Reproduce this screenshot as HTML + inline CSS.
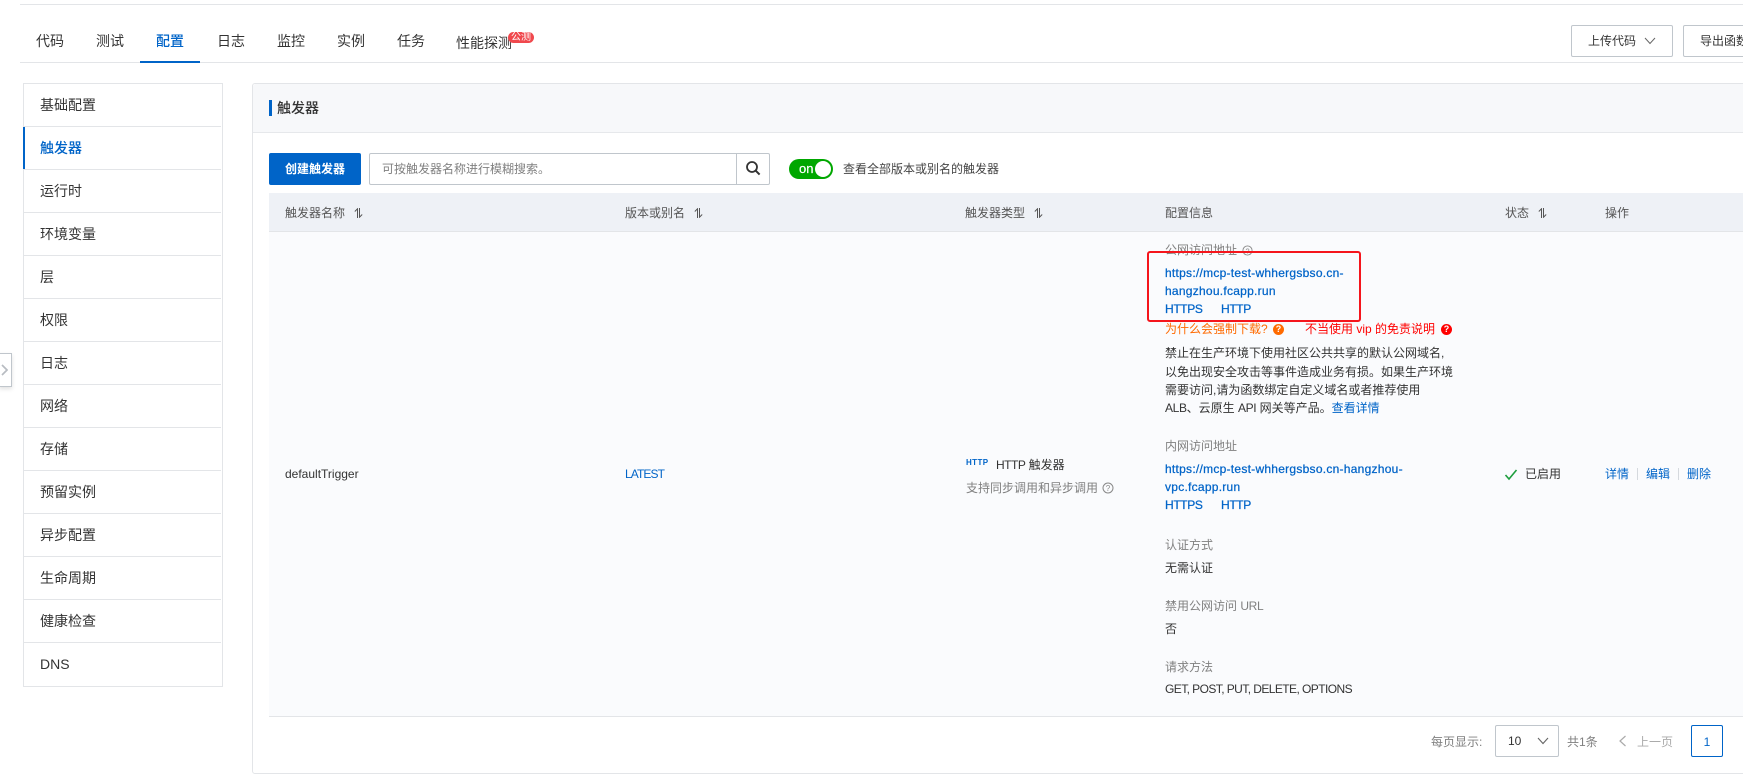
<!DOCTYPE html>
<html lang="zh-CN"><head><meta charset="utf-8"><title>触发器</title>
<style>
html,body{margin:0;padding:0;background:#fff}
body{width:1743px;height:779px;overflow:hidden;position:relative;font-family:"Liberation Sans","Noto Sans CJK SC",sans-serif;font-size:12px;color:#333}
.a,.t{position:absolute}
.t{white-space:nowrap;line-height:18px;height:18px}
.tab{font-size:14px;line-height:20px;height:20px;color:#333}
.m{position:absolute;left:23px;width:198px;height:42px;border-bottom:1px solid #e3e5e8;font-size:14px;line-height:43px;text-indent:17px;color:#333;box-sizing:content-box}
.h{color:#555}.g{color:#808080}
.l{color:#0064c8}.b{font-weight:500}
.k{-webkit-text-stroke:.25px currentColor;letter-spacing:.26px}
.u{letter-spacing:-.35px}
svg{position:absolute;display:block}
</style></head><body>
<div class="a" style="left:20px;right:0;top:4px;height:1px;background:#e3e5e8"></div>
<div class="a" style="left:20px;right:0;top:62px;height:1px;background:#e3e5e8"></div>
<div class="a" style="left:140px;width:60px;top:61px;height:2px;background:#0064c8"></div>
<div class="t tab" style="left:36px;top:31px">代码</div>
<div class="t tab" style="left:96px;top:31px">测试</div>
<div class="t tab b" style="left:156px;top:31px;color:#0064c8">配置</div>
<div class="t tab" style="left:217px;top:31px">日志</div>
<div class="t tab" style="left:277px;top:31px">监控</div>
<div class="t tab" style="left:337px;top:31px">实例</div>
<div class="t tab" style="left:397px;top:31px">任务</div>
<div class="t tab" style="left:456px;top:33px">性能探测</div>
<div class="a" style="left:508px;top:32px;width:26px;height:11px;background:#f0484d;border-radius:6px;color:#fff;font-size:10px;line-height:11px;text-align:center">公测</div>

<div class="a" style="left:1571px;top:25px;width:100px;height:30px;border:1px solid #c0c6cc;border-radius:2px"></div>
<div class="t" style="left:1588px;top:32px;color:#333">上传代码</div>
<svg style="left:1644px;top:37px" width="12" height="8" viewBox="0 0 12 8"><path d="M1 1l5 5.5L11 1" fill="none" stroke="#666" stroke-width="1"/></svg>
<div class="a" style="left:1683px;top:25px;width:100px;height:30px;border:1px solid #c0c6cc;border-radius:2px"></div>
<div class="t" style="left:1700px;top:32px;color:#333">导出函数</div>

<div class="a" style="left:23px;top:83px;width:198px;height:602px;border:1px solid #e3e5e8;box-sizing:content-box"></div>
<div class="m" style="top:84px">基础配置</div>
<div class="m b" style="top:127px;color:#0064c8">触发器</div>
<div class="a" style="left:23px;top:127px;width:2px;height:42px;background:#0064c8"></div>
<div class="m" style="top:170px">运行时</div>
<div class="m" style="top:213px">环境变量</div>
<div class="m" style="top:256px">层</div>
<div class="m" style="top:299px">权限</div>
<div class="m" style="top:342px">日志</div>
<div class="m" style="top:385px">网络</div>
<div class="m" style="top:428px">存储</div>
<div class="m" style="top:471px">预留实例</div>
<div class="m" style="top:514px">异步配置</div>
<div class="m" style="top:557px">生命周期</div>
<div class="m" style="top:600px">健康检查</div>
<div class="m" style="top:643px;border-bottom:0">DNS</div>

<div class="a" style="left:-1px;top:353px;width:11px;height:32px;background:#fff;border:1px solid #c0c6cc;box-shadow:0 2px 4px rgba(0,0,0,.12)"></div>
<svg style="left:1px;top:364px" width="7" height="12" viewBox="0 0 7 12"><path d="M1 1l5 5-5 5" fill="none" stroke="#b8bcc2" stroke-width="1.7"/></svg>

<div class="a" style="left:252px;top:83px;width:1560px;height:689px;border:1px solid #e3e5e8;border-radius:3px;box-sizing:content-box"></div>
<div class="a" style="left:253px;top:84px;width:1500px;height:48px;background:#f7f8fa;border-bottom:1px solid #e6e8eb;border-top-left-radius:3px"></div>
<div class="a" style="left:269px;top:100px;width:3px;height:16px;background:#0064c8"></div>
<div class="t b" style="left:277px;top:98px;font-size:14px;line-height:20px;height:20px;color:#333">触发器</div>

<div class="a b" style="left:269px;top:153px;width:92px;height:32px;background:#0064c8;border-radius:2px;color:#fff;text-align:center;line-height:32px;font-weight:700">创建触发器</div>
<div class="a" style="left:369px;top:153px;width:366px;height:30px;border:1px solid #c0c6cc;border-radius:2px 0 0 2px"></div>
<div class="t g" style="left:382px;top:160px">可按触发器名称进行模糊搜索。</div>
<div class="a" style="left:736px;top:153px;width:32px;height:30px;border:1px solid #c0c6cc;border-radius:0 2px 2px 0"></div>
<svg style="left:745px;top:160px" width="16" height="16" viewBox="0 0 16 16"><circle cx="7" cy="7" r="5" fill="none" stroke="#333" stroke-width="1.8"/><path d="M10.6 10.6l4 4" stroke="#333" stroke-width="2" fill="none"/></svg>
<div class="a" style="left:789px;top:159px;width:44px;height:20px;background:#00a700;border-radius:10px"></div>
<div class="a" style="left:815px;top:161px;width:16px;height:16px;background:#fff;border-radius:50%"></div>
<div class="t" style="left:799px;top:160px;color:#fff;font-size:13px;-webkit-text-stroke:.2px #fff">on</div>
<div class="t" style="left:843px;top:160px;color:#444">查看全部版本或别名的触发器</div>

<div class="a" style="left:269px;top:193px;width:1480px;height:38px;background:#eef1f6;border-bottom:1px solid #e3e5e8"></div>
<div class="a" style="left:269px;top:232px;width:1480px;height:484px;background:#fafbfd;border-bottom:1px solid #e3e5e8"></div>
<div class="t h" style="left:285px;top:204px">触发器名称</div>
<div class="t h" style="left:625px;top:204px">版本或别名</div>
<div class="t h" style="left:965px;top:204px">触发器类型</div>
<div class="t h" style="left:1165px;top:204px">配置信息</div>
<div class="t h" style="left:1505px;top:204px">状态</div>
<div class="t h" style="left:1605px;top:204px">操作</div>
<svg style="left:354px;top:208px" width="10" height="10" viewBox="0 0 10 10"><path d="M3.5 10V0.8L0.8 3.5M5.5 0v9.2L8.2 6.5" fill="none" stroke="#555" stroke-width="1"/></svg>
<svg style="left:694px;top:208px" width="10" height="10" viewBox="0 0 10 10"><path d="M3.5 10V0.8L0.8 3.5M5.5 0v9.2L8.2 6.5" fill="none" stroke="#555" stroke-width="1"/></svg>
<svg style="left:1034px;top:208px" width="10" height="10" viewBox="0 0 10 10"><path d="M3.5 10V0.8L0.8 3.5M5.5 0v9.2L8.2 6.5" fill="none" stroke="#555" stroke-width="1"/></svg>
<svg style="left:1538px;top:208px" width="10" height="10" viewBox="0 0 10 10"><path d="M3.5 10V0.8L0.8 3.5M5.5 0v9.2L8.2 6.5" fill="none" stroke="#555" stroke-width="1"/></svg>

<div class="t" style="left:285px;top:465px">defaultTrigger</div>
<div class="t l" style="left:625px;top:465px;letter-spacing:-.9px">LATEST</div>
<div class="t l" style="left:966px;top:458px;font-size:8px;font-weight:700;line-height:10px;height:10px;letter-spacing:.4px">HTTP</div>
<div class="t" style="left:996px;top:456px"><span style="letter-spacing:-.5px">HTTP</span> 触发器</div>
<div class="t g" style="left:966px;top:479px">支持同步调用和异步调用</div>
<svg style="left:1102px;top:482px" width="12" height="12" viewBox="0 0 12 12"><circle cx="6" cy="6" r="5" fill="none" stroke="#888"/><text x="6" y="9" font-size="8" text-anchor="middle" fill="#888" font-family="Liberation Sans">?</text></svg>

<div class="t g" style="left:1165px;top:241px">公网访问地址</div>
<svg style="left:1242px;top:245px" width="11" height="11" viewBox="0 0 12 12"><circle cx="6" cy="6" r="5" fill="none" stroke="#888"/><text x="6" y="9" font-size="8" text-anchor="middle" fill="#888" font-family="Liberation Sans">?</text></svg>
<div class="t l k" style="left:1165px;top:264px">https://mcp-test-whhergsbso.cn-</div>
<div class="t l k" style="left:1165px;top:282px">hangzhou.fcapp.run</div>
<div class="t l k" style="left:1165px;top:300px;letter-spacing:-.35px">HTTPS</div>
<div class="t l k" style="left:1221px;top:300px;letter-spacing:-.35px">HTTP</div>
<div class="a" style="left:1147px;top:251px;width:210px;height:67px;border:2px solid #f5151c;border-radius:3px"></div>
<div class="t" style="left:1165px;top:320px;color:#ff6a00">为什么会强制下载?</div>
<div class="a" style="left:1273px;top:324px;width:11px;height:11px;border-radius:50%;background:#ff6a00;color:#fff;font-size:9px;line-height:11px;text-align:center;font-weight:700">?</div>
<div class="t" style="left:1305px;top:320px;color:#f00">不当使用 vip 的免责说明</div>
<div class="a" style="left:1441px;top:324px;width:11px;height:11px;border-radius:50%;background:#f00;color:#fff;font-size:9px;line-height:11px;text-align:center;font-weight:700">?</div>
<div class="t" style="left:1165px;top:344px">禁止在生产环境下使用社区公共共享的默认公网域名,</div>
<div class="t" style="left:1165px;top:363px">以免出现安全攻击等事件造成业务有损。如果生产环境</div>
<div class="t" style="left:1165px;top:381px">需要访问,请为函数绑定自定义域名或者推荐使用</div>
<div class="t" style="left:1165px;top:399px"><span class="u">ALB</span>、云原生 <span class="u">API</span> 网关等产品。<span class="l">查看详情</span></div>
<div class="t g" style="left:1165px;top:437px">内网访问地址</div>
<div class="t l k" style="left:1165px;top:460px">https://mcp-test-whhergsbso.cn-hangzhou-</div>
<div class="t l k" style="left:1165px;top:478px">vpc.fcapp.run</div>
<div class="t l k" style="left:1165px;top:496px;letter-spacing:-.35px">HTTPS</div>
<div class="t l k" style="left:1221px;top:496px;letter-spacing:-.35px">HTTP</div>
<div class="t g" style="left:1165px;top:536px">认证方式</div>
<div class="t" style="left:1165px;top:559px">无需认证</div>
<div class="t g" style="left:1165px;top:597px">禁用公网访问 <span class="u">URL</span></div>
<div class="t" style="left:1165px;top:620px">否</div>
<div class="t g" style="left:1165px;top:658px">请求方法</div>
<div class="t" style="left:1165px;top:680px;letter-spacing:-.57px">GET, POST, PUT, DELETE, OPTIONS</div>

<svg style="left:1504px;top:468px" width="14" height="13" viewBox="0 0 14 13"><path d="M1.5 7l3.5 4L12.5 2" fill="none" stroke="#1e9e3e" stroke-width="1.6"/></svg>
<div class="t" style="left:1525px;top:465px">已启用</div>
<div class="t l" style="left:1605px;top:465px">详情</div>
<div class="a" style="left:1637px;top:468px;width:1px;height:12px;background:#d5d9de"></div>
<div class="t l" style="left:1646px;top:465px">编辑</div>
<div class="a" style="left:1678px;top:468px;width:1px;height:12px;background:#d5d9de"></div>
<div class="t l" style="left:1687px;top:465px">删除</div>

<div class="t g" style="left:1431px;top:733px">每页显示:</div>
<div class="a" style="left:1495px;top:725px;width:62px;height:30px;border:1px solid #c0c6cc;border-radius:2px"></div>
<div class="t" style="left:1508px;top:732px">10</div>
<svg style="left:1537px;top:737px" width="12" height="8" viewBox="0 0 12 8"><path d="M1 1l5 5.5L11 1" fill="none" stroke="#666" stroke-width="1.1"/></svg>
<div class="t g" style="left:1567px;top:733px">共1条</div>
<svg style="left:1618px;top:735px" width="9" height="12" viewBox="0 0 9 12"><path d="M7.5 1L2 6l5.5 5" fill="none" stroke="#aaa" stroke-width="1.2"/></svg>
<div class="t" style="left:1637px;top:733px;color:#aaa">上一页</div>
<div class="a l" style="left:1691px;top:725px;width:30px;height:30px;border:1px solid #0064c8;border-radius:2px;text-align:center;line-height:32px">1</div>
</body></html>
